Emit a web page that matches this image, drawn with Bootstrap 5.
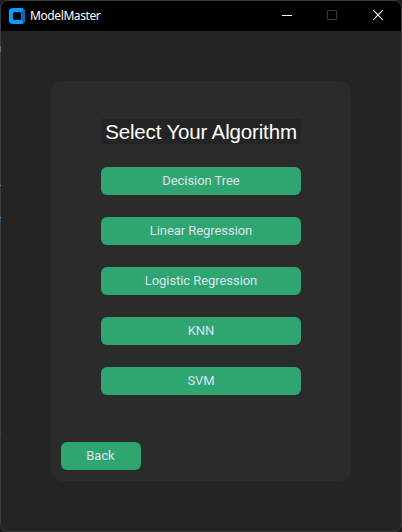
<!DOCTYPE html>
<html lang="en">
<head>
<meta charset="utf-8">
<meta name="viewport" content="width=device-width, initial-scale=1">
<title>ModelMaster</title>
<link href="https://cdn.jsdelivr.net/npm/bootstrap@5.3.0/dist/css/bootstrap.min.css" rel="stylesheet">
<style>
  body { background: #1c1c1c; font-family: Roboto, sans-serif; }
  .app-window { width: 402px; height: 532px; border: 1px solid #3c3c3c; border-radius: 8px; background: #242424; }
  .app-window::before {
    content: ""; position: absolute; left: -1px; top: 8px; width: 1px; height: 440px;
    background: linear-gradient(#3c3c3c 37px, #4f7f99 37px 41px, #8a6238 41px 43px, #3c3c3c 43px 176px, #888 176px 177px, #3c3c3c 177px 208px, #888 208px 209px, #2c5272 209px 215px, #3c3c3c 215px 423px, #6a3a30 423px 425px, #3c3c3c 425px);
  }
  .title-bar { height: 30px; background: #000; border-radius: 7px 7px 0 0; padding-left: 8px; }
  .title-text { font: 12px/16px "Noto Sans", sans-serif; color: #fff; margin-left: 5px; letter-spacing: -.4px; }
  .win-btn { width: 46px; height: 30px; }
  .panel { width: 300px; height: 400px; margin-top: 50px; border-radius: 10px; background: #2b2b2b; padding: 38px 10px 11px; }
  .panel-title { width: 200px; height: 25px; margin-bottom: 23px; background: #242424; color: #fff; font: 20.5px/26px "Liberation Sans", sans-serif; letter-spacing: -.15px; }
  .btn-algo { --bs-btn-bg: #2fa572; --bs-btn-color: #dce4ee; --bs-btn-hover-bg: #106a43; --bs-btn-hover-color: #dce4ee;
    width: 200px; height: 28px; padding: 0; font-size: 13px; line-height: 28px; letter-spacing: -.06px; border: 0; border-radius: 6px; }
  .btn-back { width: 80px; padding-right: 1px; }
  .algo-list { gap: 22px; }
</style>
</head>
<body class="overflow-hidden">
<div class="app-window position-relative d-flex flex-column">
  <header class="title-bar d-flex align-items-center">
    <svg width="16" height="16" viewBox="0 0 16 16" aria-hidden="true">
      <path fill="#0a9bff" fill-rule="evenodd" d="M4 0H12A4 4 0 0 1 16 4V12A4 4 0 0 1 12 16H4A4 4 0 0 1 0 12V4A4 4 0 0 1 4 0ZM5.500 4A1.500 1.500 0 0 0 4 5.500V10.500A1.500 1.500 0 0 0 5.500 12H10.500A1.500 1.500 0 0 0 12 10.500V5.500A1.500 1.500 0 0 0 10.500 4Z"/>
      <path fill="#0868c0" d="M12 5L14.500 1.100Q16 2.200 16 4V12Q16 14 14.500 15L12 11Z"/>
    </svg>
    <span class="title-text">ModelMaster</span>
    <div class="d-flex ms-auto">
      <span class="win-btn"><svg width="46" height="30" fill="none"><path stroke="#fff" d="M19 14.500H29"/></svg></span>
      <span class="win-btn"><svg width="46" height="30" fill="none"><rect x="18.500" y="9.500" width="9" height="9" rx=".5" stroke="#3a3a3a"/></svg></span>
      <span class="win-btn"><svg width="46" height="30" fill="none"><path stroke="#fff" stroke-width="1.100" d="M18.200 9.200L27.800 18.800M27.800 9.200L18.200 18.800"/></svg></span>
    </div>
  </header>
  <main class="panel d-flex flex-column mx-auto">
    <h1 class="panel-title mx-auto mt-0 text-center text-nowrap">Select Your Algorithm</h1>
    <div class="algo-list d-flex flex-column align-items-center">
      <button type="button" class="btn btn-algo">Decision Tree</button>
      <button type="button" class="btn btn-algo">Linear Regression</button>
      <button type="button" class="btn btn-algo">Logistic Regression</button>
      <button type="button" class="btn btn-algo">KNN</button>
      <button type="button" class="btn btn-algo">SVM</button>
    </div>
    <button type="button" class="btn btn-algo btn-back mt-auto">Back</button>
  </main>
</div>
<script src="https://cdn.jsdelivr.net/npm/bootstrap@5.3.0/dist/js/bootstrap.bundle.min.js"></script>
</body>
</html>
